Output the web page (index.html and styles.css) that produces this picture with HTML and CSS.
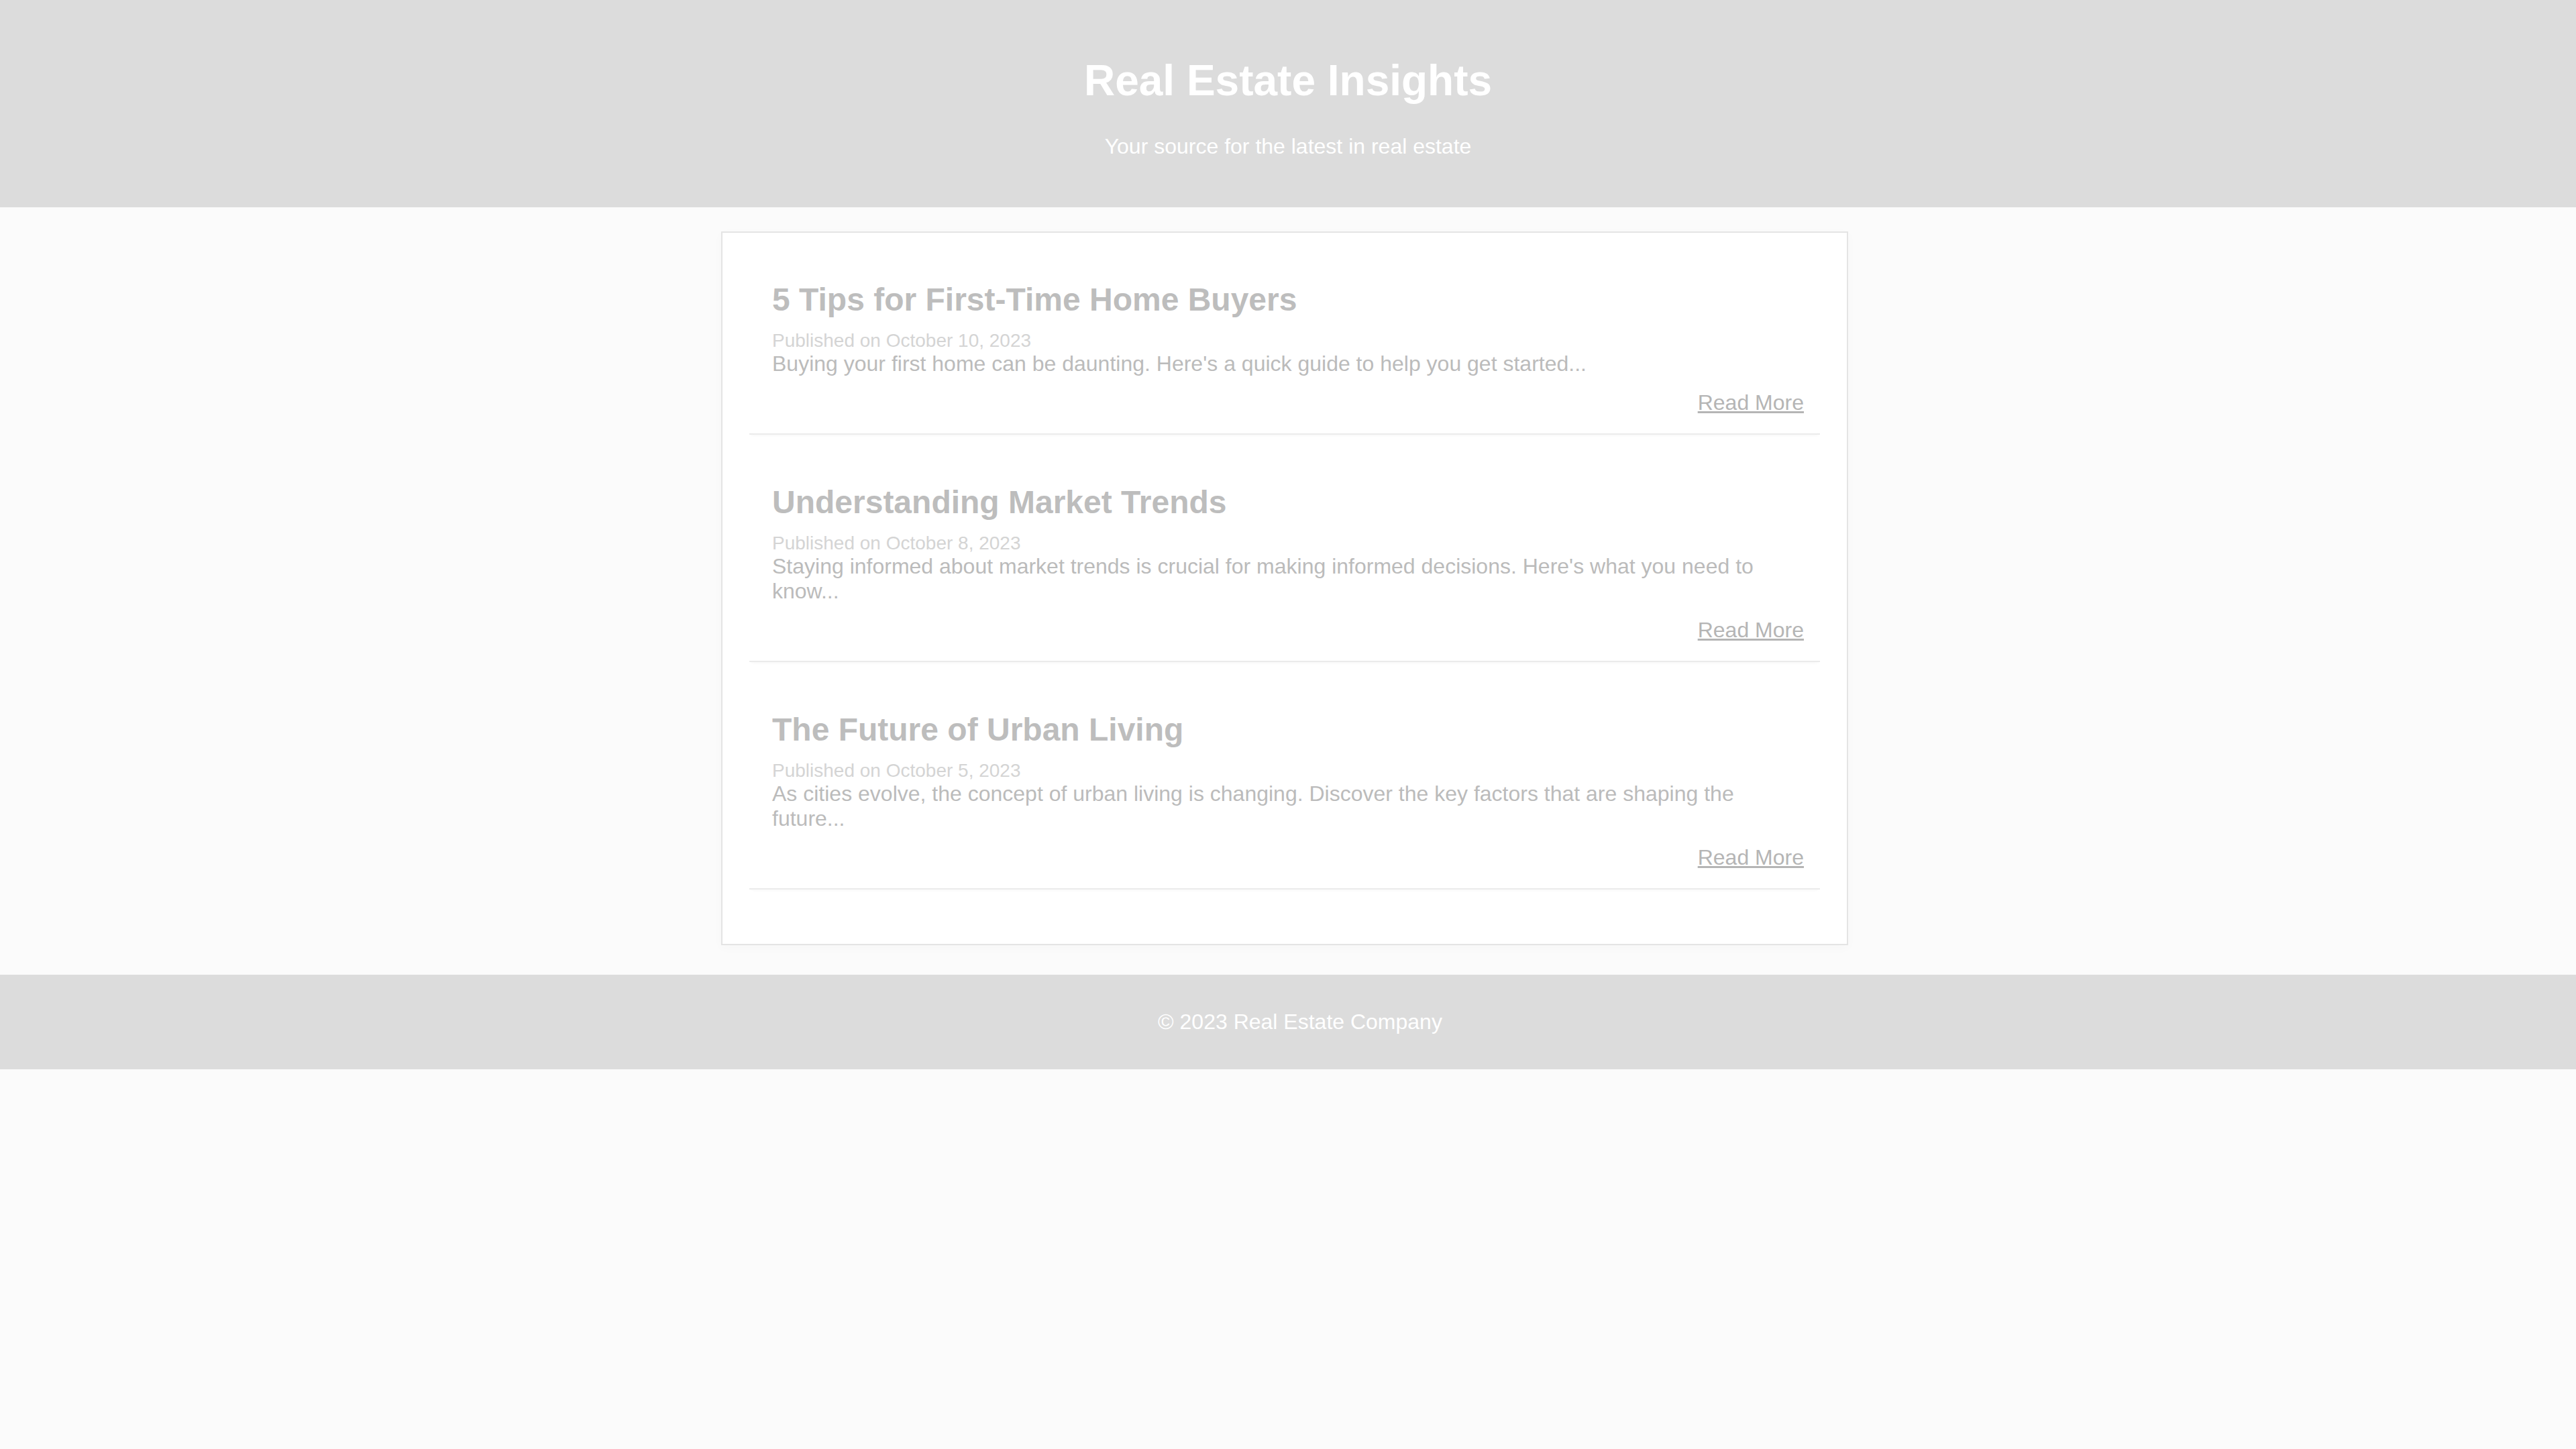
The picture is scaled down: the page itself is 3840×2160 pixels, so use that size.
FILE: index.html
```html
<!DOCTYPE html>
<html lang="en">
<head>
<meta charset="utf-8">
<title>Real Estate Insights</title>
<link rel="stylesheet" href="styles.css">
</head>
<body>
<header class="site-header">
  <h1 class="site-title">Real Estate Insights</h1>
  <p class="site-tagline">Your source for the latest in real estate</p>
</header>
<main class="posts">
  <article class="post">
    <h2 class="post-title">5 Tips for First-Time Home Buyers</h2>
    <p class="post-date">Published on October 10, 2023</p>
    <p class="post-excerpt">Buying your first home can be daunting. Here's a quick guide to help you get started...</p>
    <div class="post-more"><a href="#" class="read-more">Read More</a></div>
  </article>
  <article class="post">
    <h2 class="post-title">Understanding Market Trends</h2>
    <p class="post-date">Published on October 8, 2023</p>
    <p class="post-excerpt">Staying informed about market trends is crucial for making informed decisions. Here's what you need to know...</p>
    <div class="post-more"><a href="#" class="read-more">Read More</a></div>
  </article>
  <article class="post">
    <h2 class="post-title">The Future of Urban Living</h2>
    <p class="post-date">Published on October 5, 2023</p>
    <p class="post-excerpt">As cities evolve, the concept of urban living is changing. Discover the key factors that are shaping the future...</p>
    <div class="post-more"><a href="#" class="read-more">Read More</a></div>
  </article>
</main>
<footer class="site-footer">
  <p class="copyright">&copy; 2023 Real Estate Company</p>
</footer>
</body>
</html>
```
FILE: styles.css
```css
body {
  margin: 0;
  background: #fbfbfb;
  font-family: "Liberation Sans", Arial, sans-serif;
}

.site-header {
  background: #dcdcdc;
  color: #ffffff;
  text-align: center;
  padding: 40px;
}

.site-title {
  font-size: 64px;
  font-weight: bold;
  margin: 43px 0;
}

.site-tagline {
  font-size: 32px;
  margin: 32px 0;
}

.posts {
  box-sizing: border-box;
  width: 1680px;
  margin: 36px auto 44px;
  margin-left: calc(50% - 845px);
  padding: 40px;
  background: #ffffff;
  border: 2px solid #e4e4e4;
  box-shadow: 0 4px 14px rgba(0, 0, 0, 0.025);
}

.post {
  padding: 32px 24px 27px 34px;
  margin-bottom: 41px;
  border-bottom: 2px solid #ebebeb;
  box-shadow: 0 4px 4px -3px rgba(0, 0, 0, 0.04);
}

.post-title {
  font-size: 48px;
  font-weight: bold;
  color: #bdbdbd;
  margin: 0 0 18px;
}

.post-date {
  font-size: 28px;
  color: #d4d4d4;
  margin: 0;
}

.post-excerpt {
  font-size: 32px;
  color: #bbbbbb;
  margin: 0;
}

.post-more {
  margin-top: 21px;
  text-align: right;
}

.read-more {
  font-size: 32px;
  color: #b5b5b5;
  text-decoration: underline;
}

.site-footer {
  background: #dcdcdc;
  color: #ffffff;
  text-align: center;
  padding: 20px 20px 20px 56px;
}

.copyright {
  font-size: 32px;
  margin: 32px 0;
}
```
